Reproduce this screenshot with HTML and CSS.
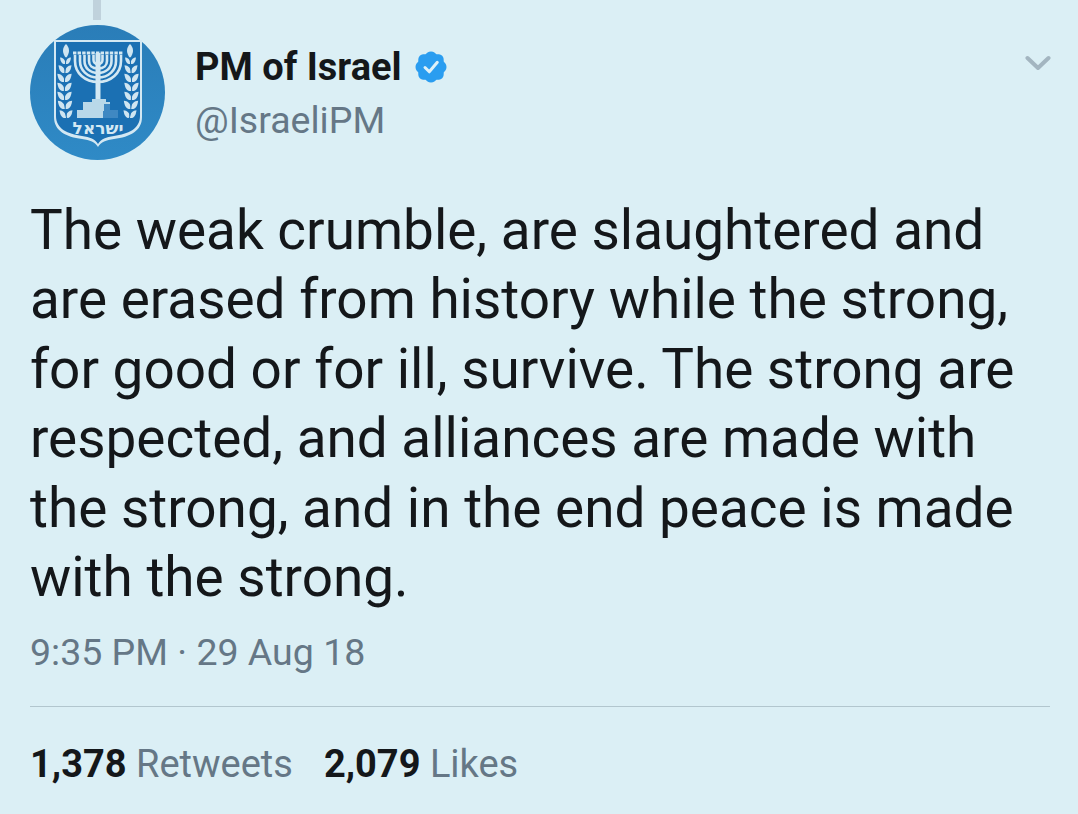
FILE: index.html
```html
<!DOCTYPE html>
<html lang="en">
<head>
<meta charset="utf-8">
<title>PM of Israel</title>
<link rel="stylesheet" href="styles.css">
</head>
<body>
<main class="tweet">
  <div class="thread-line"></div>
  <header class="head">
    <svg class="avatar" viewBox="0 0 135 135" aria-label="Emblem of Israel">
      <defs>
        <linearGradient id="disc" x1="0" y1="0" x2="0" y2="1">
          <stop offset="0" stop-color="#2a7db8"/>
          <stop offset="1" stop-color="#2f8ac6"/>
        </linearGradient>
        <g id="leaf-pair">
          <path d="M0 0C-8 1 -12 -4 -13 -11C-6 -11 0 -7 0 0Z"/>
          <path d="M0 0C8 1 12 -4 13 -11C6 -11 0 -7 0 0Z"/>
        </g>
        <g id="branch">
          <use href="#leaf-pair" transform="translate(36 93) scale(.5 .7)"/>
          <use href="#leaf-pair" transform="translate(35 84) scale(.55 .75)"/>
          <use href="#leaf-pair" transform="translate(34.500 75) scale(.55 .75)"/>
          <use href="#leaf-pair" transform="translate(34.500 66) scale(.55 .75)"/>
          <use href="#leaf-pair" transform="translate(34.500 57) scale(.55 .75)"/>
          <use href="#leaf-pair" transform="translate(35 48) scale(.5 .7)"/>
          <use href="#leaf-pair" transform="translate(35.500 39) scale(.42 .6)"/>
          <path d="M36 19C40 23 40 28 36 33C32 28 32 23 36 19Z"/>
          <path class="stem" d="M36 32C34 55 33 80 38 99"/>
        </g>
      </defs>
      <circle cx="67.500" cy="67.500" r="67.500" fill="url(#disc)"/>
      <path class="shield" d="M24 15H112V92C112 106 100 112 84 114C76 115 71 117 68 122C65 117 60 115 52 114C36 112 24 106 24 92Z"/>
      <path class="shield-in" d="M26 17H110V91C110 104 98 109 84 111C76 112 71 114 68 119C65 114 60 112 52 111C38 109 26 104 26 91Z"/>
      <g class="art">
        <use href="#branch"/>
        <use href="#branch" transform="translate(136 0) scale(-1 1)"/>
      </g>
      <g class="menorah">
        <path d="M45 30V36C45 48 55 57 68 57C81 57 91 48 91 36V30"/>
        <path d="M50 30V36C50 45 57 52.500 68 52.500C79 52.500 86 45 86 36V30"/>
        <path d="M54.500 30V36C54.500 43 60 48 68 48C76 48 81.500 43 81.500 36V30"/>
        <path d="M59 30V36C59 40 62 43.500 68 43.500C74 43.500 77 40 77 36V30"/>
        <path d="M63.500 30V35C63.500 37 65 39 68 39C71 39 72.500 37 72.500 35V30"/>
        <path class="thick" d="M68 28V76"/>
        <path class="cups" d="M43 28H93"/>
      </g>
      <g class="steps">
        <rect x="62" y="74" width="14" height="4"/>
        <rect x="53" y="77" width="27" height="8"/>
        <rect x="47" y="85" width="41" height="8"/>
      </g>
      <path class="steps-dark" d="M74 79H80V85H88V93H73V86H74Z"/>
      <text class="motto" x="68" y="109" text-anchor="middle">ישראל</text>
    </svg>
    <div class="names">
      <div class="name-row">
        <span class="name">PM of Israel</span>
        <svg class="badge" viewBox="0 0 34 34" aria-label="Verified">
          <path fill="#2a9df0" d="M17 1.500C19.800 1.500 21.500 3.400 22.500 4.300C24 4.300 26.300 4 28.200 5.800C30 7.700 29.700 10 29.700 11.500C30.600 12.500 32.500 14.200 32.500 17C32.500 19.800 30.600 21.500 29.700 22.500C29.700 24 30 26.300 28.200 28.200C26.300 30 24 29.700 22.500 29.700C21.500 30.600 19.800 32.500 17 32.500C14.200 32.500 12.500 30.600 11.500 29.700C10 29.700 7.700 30 5.800 28.200C4 26.300 4.300 24 4.300 22.500C3.400 21.500 1.500 19.800 1.500 17C1.500 14.200 3.400 12.500 4.300 11.500C4.300 10 4 7.700 5.800 5.800C7.700 4 10 4.300 11.500 4.300C12.500 3.400 14.200 1.500 17 1.500Z"/>
          <path fill="none" stroke="#dff1f8" stroke-width="3" stroke-linecap="round" stroke-linejoin="round" d="M11 17.500L15.300 21.800L23.300 12.300"/>
        </svg>
      </div>
      <div class="handle">@IsraeliPM</div>
    </div>
    <svg class="chevron" viewBox="0 0 26 16" aria-label="More">
      <path d="M2.500 3L13 13L23.500 3"/>
    </svg>
  </header>
  <p class="text">The weak crumble, are slaughtered and<br>are erased from history while the strong,<br>for good or for ill, survive. The strong are<br>respected, and alliances are made with<br>the strong, and in the end peace is made<br>with the strong.</p>
  <div class="time">9:35 PM · 29 Aug 18</div>
  <div class="stats">
    <span class="stat"><b>1,378</b> Retweets</span>
    <span class="stat"><b>2,079</b> Likes</span>
  </div>
</main>
</body>
</html>
```
FILE: styles.css
```css
* { box-sizing: border-box; }
html, body { margin: 0; height: 100%; }
body {
  background: #dbeff5;
  color: #14171a;
  font-family: Roboto, "Liberation Sans", sans-serif;
  overflow: hidden;
}
.tweet { padding: 0 28px 0 30px; }
.thread-line { width: 8px; height: 20px; margin-left: 63px; background: #c0d2dc; }
.head { display: flex; align-items: flex-start; margin-top: 5px; }
.avatar { width: 135px; height: 135px; flex: none; display: block; }
.shield { fill: #d3e8f3; }
.shield-in { fill: #1b70b3; }
.art { fill: #cfe5f1; }
.stem { fill: none; stroke: #1b70b3; stroke-width: 1; }
.menorah path { fill: none; stroke: #d3e8f3; stroke-width: 2.600; }
.menorah .thick { stroke-width: 5; }
.menorah .cups { stroke-width: 3; stroke-dasharray: 3.400 1.200; }
.steps { fill: #b9d8e9; }
.steps-dark { fill: #3f88c2; }
.motto { fill: #d3e8f3; font-family: "DejaVu Sans", sans-serif; font-size: 17px; font-weight: 700; }
.names { flex: 1; margin-left: 30px; padding-top: 20px; }
.name-row { display: flex; align-items: center; height: 44px; }
.name { font-size: 38px; font-weight: 700; line-height: 44px; }
.badge { width: 34px; height: 34px; margin-left: 12px; }
.handle { font-size: 37.500px; line-height: 44px; color: #657786; margin-top: 9px; }
.chevron { width: 26px; height: 16px; margin: 30px -1px 0 0; flex: none; }
.chevron path { fill: none; stroke: #a3b5c0; stroke-width: 4; stroke-linecap: round; stroke-linejoin: round; }
.text { margin: 36px 0 0; font-size: 54.900px; line-height: 69.400px; white-space: nowrap; }
.time { margin-top: 18px; padding-bottom: 32px; font-size: 37.500px; line-height: 44px; color: #657786; border-bottom: 1px solid #b2c6ce; }
.stats { display: flex; gap: 31px; margin-top: 35px; font-size: 38px; line-height: 44px; color: #657786; }
.stat b { color: #14171a; font-weight: 700; }
```
